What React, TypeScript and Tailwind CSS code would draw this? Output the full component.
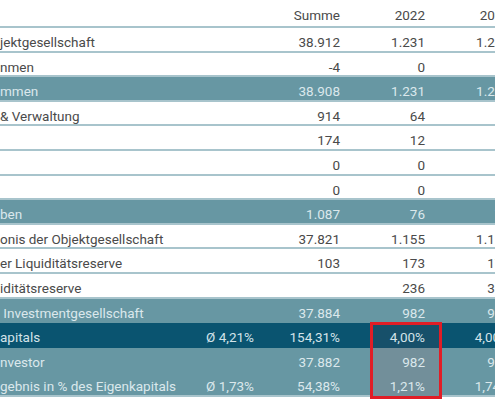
import React from "react";

type Row = {
  label: string;
  avg?: string;
  values: string[];
  tone: "white" | "teal" | "dark";
  line?: boolean;
  mark?: string;
};

const rows: Row[] = [
  { label: "jektgesellschaft", values: ["38.912", "1.231", "1.231"], tone: "white" },
  { label: "nmen", values: ["-4", "0", "0"], tone: "white" },
  { label: "mmen", values: ["38.908", "1.231", "1.231"], tone: "teal" },
  { label: "& Verwaltung", values: ["914", "64", "64"], tone: "white" },
  { label: "", values: ["174", "12", "12"], tone: "white" },
  { label: "", values: ["0", "0", "0"], tone: "white" },
  { label: "", values: ["0", "0", "0"], tone: "white" },
  { label: "ben", values: ["1.087", "76", "76"], tone: "teal" },
  { label: "onis der Objektgesellschaft", values: ["37.821", "1.155", "1.155"], tone: "white" },
  { label: "er Liquiditätsreserve", values: ["103", "173", "173"], tone: "white" },
  { label: "iditätsreserve", values: ["", "236", "336"], tone: "white" },
  { label: "\u00a0Investmentgesellschaft", values: ["37.884", "982", "982"], tone: "teal", line: false },
  { label: "apitals", avg: "Ø 4,21%", values: ["154,31%", "4,00%", "4,00%"], tone: "dark", line: false, mark: "bg-[#17506a]" },
  { label: "nvestor", values: ["37.882", "982", "982"], tone: "teal", line: false, mark: "bg-[#728f9a]" },
  { label: "gebnis in % des Eigenkapitals", avg: "Ø 1,73%", values: ["54,38%", "1,21%", "1,74%"], tone: "teal", mark: "bg-[#728f9a]" },
];

const toneClass = {
  white: "bg-white text-[#4a4a4a]",
  teal: "bg-[#6797a3] text-[#dbe8ec]",
  dark: "bg-[#0a5470] text-[#d3e3e9]",
};

export default function App() {
  return (
    <div
      className="relative w-[495px] h-[400px] overflow-hidden bg-white text-[13.5px]"
      style={{ fontFamily: "Roboto, 'Liberation Sans', sans-serif" }}
    >
      <div className="w-[510px]">
        {/* header */}
        <div className="grid grid-cols-[168px_86px_86px_85px_85px] h-[28px] items-center border-b-2 border-[#a8c4cc] text-[#4a4a4a] pt-[4px]">
          <div />
          <div />
          <div className="text-right">Summe</div>
          <div className="text-right">2022</div>
          <div className="text-right">2023</div>
        </div>

        {rows.map((row, i) => (
          <div
            key={i}
            className={`grid grid-cols-[168px_86px_86px_85px_85px] h-[24.6px] border-b-2 ${toneClass[row.tone]} ${
              row.line === false ? "border-transparent" : "border-[#a8c4cc]"
            }`}
          >
            <div className="whitespace-nowrap pt-[4px]">{row.label}</div>
            <div className="text-right pt-[4px]">{row.avg ?? ""}</div>
            {row.values.map((v, j) => (
              <div key={j} className="relative text-right pt-[4px]">
                {/* tinted part of the marked 2022 cells */}
                {j === 1 && row.mark && (
                  <span className={`absolute left-[30px] right-[-17px] top-0 bottom-[-2px] ${row.mark}`} />
                )}
                <span className="relative">{v}</span>
              </div>
            ))}
          </div>
        ))}
      </div>

      {/* red annotation frame */}
      <div className="absolute left-[370px] top-[322px] w-[72px] h-[77px] border-[3px] border-[#e11d26]" />
    </div>
  );
}
